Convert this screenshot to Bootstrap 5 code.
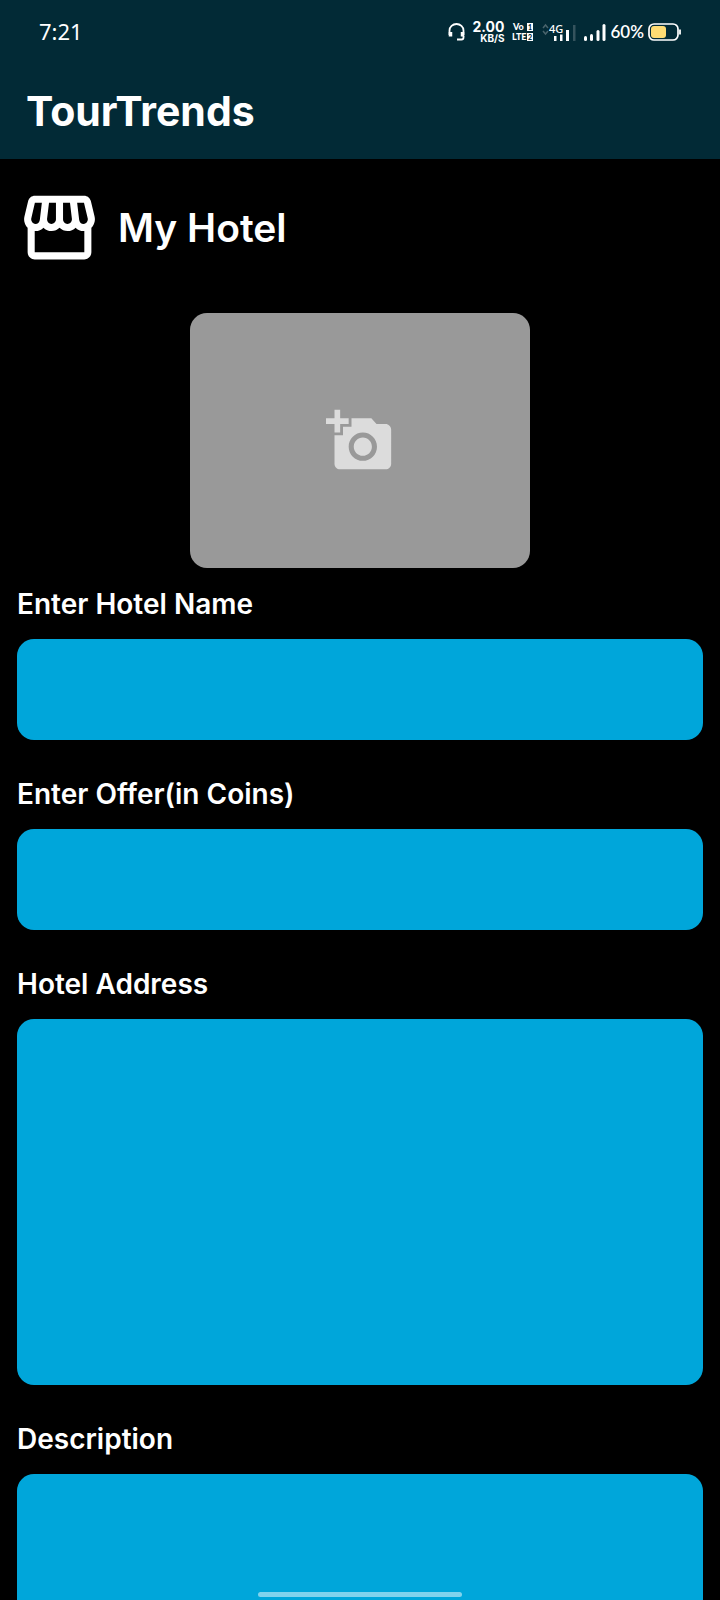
<!DOCTYPE html>
<html lang="en">
<head>
<meta charset="utf-8">
<meta name="viewport" content="width=device-width, initial-scale=1">
<title>TourTrends</title>
<link href="https://cdn.jsdelivr.net/npm/bootstrap@5.3.0/dist/css/bootstrap.min.css" rel="stylesheet">
<style>
  body { background: #000; color: #fff; font-family: Inter, "Liberation Sans", sans-serif; }
  .app-header { background: #022a36; }
  .status-bar { height: 64px; padding: 0 38px 0 39px; }
  .status-time { font: 400 22px/32px "Noto Sans", sans-serif; padding-bottom: 2px; }
  .net-speed { font: 700 14px/12px Inter, sans-serif; }
  .net-speed small { font-size: 10px; line-height: 10px; }
  .battery-level { font: 600 17px/20px Lato, "Noto Sans", sans-serif; }
  .app-title { font-size: 41px; line-height: 48px; font-weight: 700; padding: 23px 26px 24px; }
  .page-body { overflow-y: auto; scrollbar-width: none; padding: 26px 17px; }
  .section-title { font-size: 39px; line-height: 48px; font-weight: 600; }
  .photo-btn { width: 340px; height: 255px; margin-top: 43px; border-radius: 17px; background: #999; color: #dcdcdc; }
  .field-label { font-size: 28px; line-height: 36px; font-weight: 600; padding: 18px 0 17px; }
  .field-box, .field-box:focus { background: #00a6da; border: 0; border-radius: 17px; color: #fff; font-size: 28px; padding: 16px; resize: none; }
  .field-group + .field-group { margin-top: 18px; }
  .field-line { height: 101px; }
  .field-area { height: 366px; }
  .home-bar { width: 204px; height: 5px; margin-bottom: 3px; background: rgba(255,255,255,.5); }
</style>
</head>
<body class="vh-100 overflow-hidden d-flex flex-column">
<header class="app-header flex-shrink-0">
  <div class="status-bar d-flex align-items-center justify-content-between">
    <span class="status-time">7:21</span>
    <div class="d-flex align-items-center">
      <svg class="me-2" width="17" height="20" viewBox="0 0 17 20" fill="none" stroke="#fff" stroke-width="1.800"><path d="M1.500 13V8.500a7 6.500 0 0 1 14 0V13M15.500 14v1.500a2 2 0 0 1-2 2H9"/><path d="M2.500 10v4.500M14.500 10v4.500" stroke-width="3.500"/></svg>
      <span class="net-speed d-flex flex-column align-items-end me-2"><span>2.00</span><small>KB/S</small></span>
      <svg class="me-2" width="22" height="20" viewBox="0 0 22 20" font-family="Lato, sans-serif" font-weight="900" font-size="9" fill="#fff"><text x="1" y="8">Vo</text><text x="0" y="18">LTE</text><path d="M15 1h6v8h-6zM15 11h6v8h-6z"/><g fill="#022a36" font-size="7"><text x="16" y="8">1</text><text x="16" y="18">2</text></g></svg>
      <svg class="me-2" width="34" height="20" viewBox="0 0 34 20"><path d="M1 6l2.500-3L6 6M1 9l2.500 3L6 9" fill="none" stroke="#48636c" stroke-width="1.500"/><text x="7" y="11" font-family="Noto Sans, sans-serif" font-size="11" font-weight="500" fill="#fff">4G</text><path d="M12 14h2.500v5H12zM18 12.500h2.500V19H18zM24 8h3v11h-3z" fill="#fff"/><path d="M31 3h2.500v16H31z" fill="#35535d"/></svg>
      <svg class="me-1" width="22" height="20" viewBox="0 0 22 20" fill="#fff"><rect y="14" width="3" height="5" rx="1.500"/><rect x="6" y="12" width="3" height="7" rx="1.500"/><rect x="12.500" y="8" width="3" height="11" rx="1.500"/><rect x="18.500" y="2" width="3" height="17" rx="1.500"/></svg>
      <span class="battery-level me-1">60%</span>
      <svg width="34" height="20" viewBox="0 0 34 20"><rect x="1" y="2" width="29" height="16" rx="5" fill="none" stroke="#fff" stroke-width="1.700"/><rect x="3" y="4" width="15" height="12" rx="3" fill="#ffdc73"/><path d="M32 7.500v5" stroke="#fff" stroke-width="1.800"/></svg>
    </div>
  </div>
  <h1 class="app-title m-0">TourTrends</h1>
</header>

<main class="page-body flex-grow-1">
  <div class="d-flex align-items-center gap-3">
    <svg width="85" height="85" viewBox="0 0 24 24" fill="currentColor" aria-hidden="true"><path d="M21.900 8.890l-1.050-4.370c-.22-.9-1-1.520-1.910-1.520H5.050c-.9 0-1.690.63-1.900 1.520L2.100 8.890c-.24 1.020-.02 2.060.62 2.880.08.11.19.19.28.29V19c0 1.100.9 2 2 2h14c1.100 0 2-.9 2-2v-6.940c.09-.09.2-.18.28-.28.64-.82.87-1.870.62-2.890zm-2.990-3.900l1.050 4.370c.1.42.01.84-.25 1.170-.14.18-.44.47-.94.47-.61 0-1.140-.49-1.210-1.140L16.980 5l1.930-.01zM13 5h1.960l.54 4.520c.05.39-.07.78-.33 1.070-.22.26-.54.41-.95.41-.67 0-1.220-.59-1.220-1.310V5zM8.490 9.520L9.040 5H11v4.690c0 .72-.55 1.310-1.290 1.310-.34 0-.65-.15-.89-.41-.25-.29-.37-.68-.33-1.070zm-4.450-.16L5.050 5h1.970l-.58 4.860c-.08.65-.6 1.140-1.210 1.140-.49 0-.8-.29-.93-.47-.27-.32-.36-.75-.26-1.170zM5 19v-6.030c.08.01.15.03.23.03.87 0 1.660-.36 2.240-.95.6.6 1.400.95 2.310.95.87 0 1.650-.36 2.230-.93.59.57 1.390.93 2.290.93.84 0 1.640-.35 2.240-.95.58.59 1.370.95 2.240.95.08 0 .15-.02.23-.03V19H5z"/></svg>
    <h2 class="section-title m-0">My Hotel</h2>
  </div>
  <form>
    <button type="button" class="photo-btn btn border-0 d-flex align-items-center justify-content-center mx-auto p-0" aria-label="Add photo">
      <svg width="68" height="68" viewBox="0 0 24 24" fill="currentColor" aria-hidden="true"><path d="M3 4V1h2v3h3v2H5v3H3V6H0V4h3zm3 6V7h3V4h7l1.830 2H21c1.100 0 2 .9 2 2v12c0 1.100-.9 2-2 2H5c-1.100 0-2-.9-2-2V10h3zm7 9c2.760 0 5-2.240 5-5s-2.240-5-5-5-5 2.240-5 5 2.240 5 5 5zm-3.200-5c0 1.770 1.430 3.200 3.200 3.200s3.200-1.430 3.200-3.200-1.430-3.200-3.200-3.200-3.200 1.430-3.200 3.200z"/></svg>
    </button>
    <div class="field-group">
      <label class="field-label d-block" for="hotelName">Enter Hotel Name</label>
      <input class="form-control field-box field-line" id="hotelName" type="text">
    </div>
    <div class="field-group">
      <label class="field-label d-block" for="offer">Enter Offer(in Coins)</label>
      <input class="form-control field-box field-line" id="offer" type="text" inputmode="numeric">
    </div>
    <div class="field-group">
      <label class="field-label d-block" for="address">Hotel Address</label>
      <textarea class="form-control field-box field-area" id="address"></textarea>
    </div>
    <div class="field-group">
      <label class="field-label d-block" for="description">Description</label>
      <textarea class="form-control field-box field-area" id="description"></textarea>
    </div>
  </form>
</main>
<div class="home-bar rounded-pill position-fixed bottom-0 start-50 translate-middle-x"></div>
<script src="https://cdn.jsdelivr.net/npm/bootstrap@5.3.0/dist/js/bootstrap.bundle.min.js"></script>
</body>
</html>
